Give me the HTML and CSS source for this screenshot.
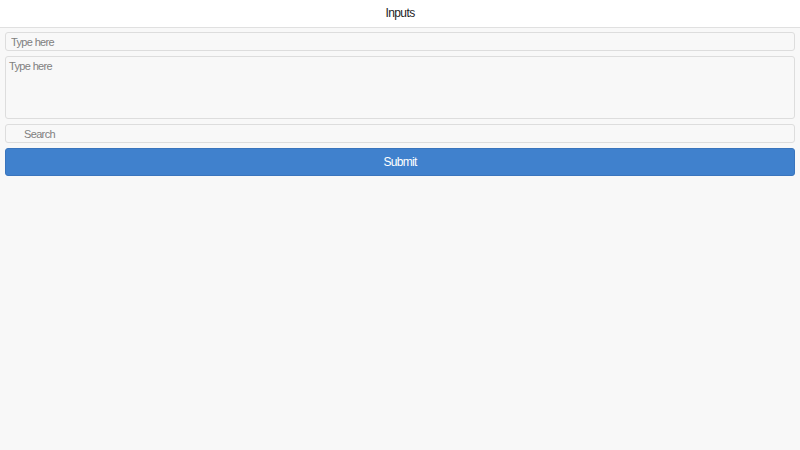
FILE: index.html
```html
<html>

<head>
  <meta charset="utf-8" />
  <meta name="viewport" content="width=device-width, initial-scale=1" />
  <title>Inputs</title>
  <link rel="stylesheet" href="styles.css">
</head>

<body>
  <div class="header">Inputs</div>

  <div class="content">
    <input type="text" class="field" placeholder="Type here" />
    <textarea class="field area" placeholder="Type here"></textarea>
    <input type="search" class="field search" placeholder="Search" />
    <button class="submit">Submit</button>
  </div>
</body>

</html>
```

FILE: styles.css
```css
body {
  margin: 0;
  background: #f8f8f8;
  font: 13px "Liberation Sans", Arial, sans-serif;
  color: #222;
}

.header {
  height: 27px;
  line-height: 27px;
  text-align: center;
  background: #fff;
  border-bottom: 1px solid #e0e0e0;
  font-size: 12px;
  letter-spacing: -0.6px;
}

.content {
  display: flex;
  flex-direction: column;
  gap: 5px;
  padding: 4px 5px;
}

.field {
  display: block;
  box-sizing: border-box;
  width: 100%;
  height: 19px;
  margin: 0;
  padding: 0 5px;
  border: 1px solid #ddd;
  border-radius: 3px;
  background: #f8f8f8;
  font: 11px "Liberation Sans", Arial, sans-serif;
  letter-spacing: -0.65px;
  color: #333;
  outline: none;
}

.field::placeholder {
  color: #808080;
}

.area {
  height: 63px;
  padding: 3px 3px;
  resize: none;
}

.search {
  -webkit-appearance: none;
  padding-left: 18px;
}

.submit {
  height: 28px;
  margin: 0;
  border: 1px solid #3a75bd;
  border-radius: 3px;
  background: #4081cd;
  color: #fff;
  font: 12px "Liberation Sans", Arial, sans-serif;
  letter-spacing: -0.7px;
}
```
